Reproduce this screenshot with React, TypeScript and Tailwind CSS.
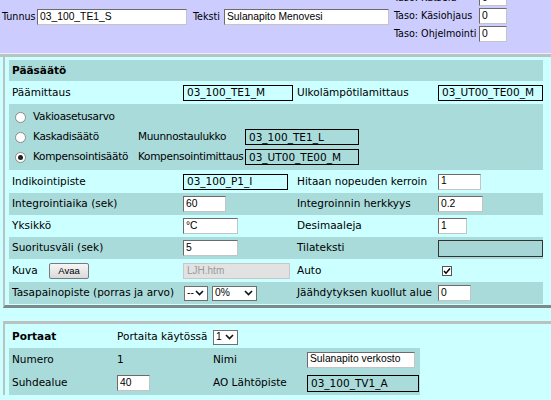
import React from "react";

const BLUE = "bg-[#a9dbdb]";
const CYAN = "bg-[#ccffff]";

function Field({ w, value, className = "" }: { w: string; value: string; className?: string }) {
  return (
    <div
      className={`${w} h-[16px] bg-white border border-t-[#6b6b6b] border-l-[#6b6b6b] border-r-[#c4c4c4] border-b-[#c4c4c4] flex items-center pl-[2px] font-['Liberation_Sans',Arial,sans-serif] text-[10.3px] leading-none text-black whitespace-nowrap overflow-hidden ${className}`}
    >
      {value}
    </div>
  );
}

function Box({ w, value, className = "" }: { w: string; value: string; className?: string }) {
  return (
    <div
      className={`${w} h-[16px] border border-black flex items-center pl-[3px] leading-none whitespace-nowrap overflow-hidden ${className}`}
    >
      {value}
    </div>
  );
}

function Radio({ checked }: { checked?: boolean }) {
  return (
    <span className="w-[11px] h-[11px] rounded-full bg-white border border-[#8a8a8a] flex items-center justify-center shrink-0">
      {checked && <span className="w-[5px] h-[5px] rounded-full bg-[#222]" />}
    </span>
  );
}

function Select({ w, value }: { w: string; value: string }) {
  return (
    <div
      className={`${w} h-[15px] bg-white border border-[#707070] flex items-center justify-between pl-[2px] pr-[3px] font-['Liberation_Sans',Arial,sans-serif] text-[10.3px] leading-none`}
    >
      <span>{value}</span>
      <svg width="9" height="6" viewBox="0 0 9 6">
        <path d="M1 1 L4.5 4.5 L8 1" fill="none" stroke="#111" strokeWidth="1.6" />
      </svg>
    </div>
  );
}

const ROW = "grid grid-cols-[172px_113px_142px_1fr] items-center";
const RROW = "grid grid-cols-[129px_107px_1fr] items-center h-[20px]";

export default function App() {
  return (
    <div className="w-[551px] h-[400px] overflow-hidden bg-[#ccffff] font-['DejaVu_Sans',sans-serif] text-[10.5px] text-black">
      {/* Top header */}
      <div className="bg-[#ccccff] -mt-[11px] pb-[10px] flex items-start font-['DejaVu_Sans_Condensed','DejaVu_Sans',sans-serif] text-[10.67px]">
        <div className="flex items-center mt-[20px]">
          <span className="w-[37px] pl-[2px]">Tunnus</span>
          <Field w="w-[150px]" value="03_100_TE1_S" />
          <span className="w-[37px] pl-[6px]">Teksti</span>
          <Field w="w-[165px]" value="Sulanapito Menovesi" />
        </div>
        <div className="ml-[5px] flex flex-col">
          {[
            ["Taso: Katselu", "0"],
            ["Taso: Käsiohjaus", "0"],
            ["Taso: Ohjelmointi", "0"],
          ].map(([l, v]) => (
            <div key={l} className="h-[18px] flex items-center">
              <span className="w-[85px] whitespace-nowrap">{l}</span>
              <Field w="w-[28px]" value={v} />
            </div>
          ))}
        </div>
      </div>
      <div className="h-px bg-[#eeeeff]" />
      <div className="h-[3px] bg-[#b9c3c3]" />

      {/* Pääsäätö panel */}
      <div className="ml-[3px] border-l-2 border-l-[#b9c3c3] border-b-[3px] border-b-[#7e8a8a] pl-[4px] pr-[8px] pt-[3px] pb-[1px]">
        <div className={`h-[21px] ${BLUE} flex items-center pl-[3px] font-bold`}>Pääsäätö</div>

        <div className={`${ROW} h-[23px] ${CYAN}`}>
          <span className="pl-[3px]">Päämittaus</span>
          <Box w="w-[110px]" value="03_100_TE1_M" className="ml-[2px]" />
          <span className="pl-[3px]">Ulkolämpötilamittaus</span>
          <Box w="w-[105px]" value="03_UT00_TE00_M" className="ml-[2px]" />
        </div>

        <div className={`h-[66px] ${BLUE} pt-[3px] tracking-[-0.3px]`}>
          <div className={RROW}>
            <div className="flex items-center gap-[7px] pl-[6px]">
              <Radio />
              <span>Vakioasetusarvo</span>
            </div>
          </div>
          <div className={RROW}>
            <div className="flex items-center gap-[7px] pl-[6px]">
              <Radio />
              <span>Kaskadisäätö</span>
            </div>
            <span>Muunnostaulukko</span>
            <Box w="w-[114px]" value="03_100_TE1_L" className="tracking-normal" />
          </div>
          <div className={RROW}>
            <div className="flex items-center gap-[7px] pl-[6px] whitespace-nowrap">
              <Radio checked />
              <span>Kompensointisäätö</span>
            </div>
            <span className="whitespace-nowrap">Kompensointimittaus</span>
            <Box w="w-[114px]" value="03_UT00_TE00_M" className="tracking-normal" />
          </div>
        </div>

        <div className={`${ROW} h-[23px] ${CYAN}`}>
          <span className="pl-[3px]">Indikointipiste</span>
          <Box w="w-[105px]" value="03_100_P1_I" className="ml-[2px]" />
          <span className="pl-[3px]">Hitaan nopeuden kerroin</span>
          <Field w="w-[43px]" value="1" className="ml-[2px]" />
        </div>

        <div className={`${ROW} h-[22px] ${BLUE}`}>
          <span className="pl-[3px]">Integrointiaika (sek)</span>
          <Field w="w-[43px]" value="60" className="ml-[2px]" />
          <span className="pl-[3px]">Integroinnin herkkyys</span>
          <Field w="w-[45px]" value="0.2" className="ml-[2px]" />
        </div>

        <div className={`${ROW} h-[22px] ${CYAN}`}>
          <span className="pl-[3px]">Yksikkö</span>
          <Field w="w-[55px]" value="°C" className="ml-[2px]" />
          <span className="pl-[3px]">Desimaaleja</span>
          <Field w="w-[29px]" value="1" className="ml-[2px]" />
        </div>

        <div className={`${ROW} h-[22px] ${BLUE}`}>
          <span className="pl-[3px]">Suoritusväli (sek)</span>
          <Field w="w-[55px]" value="5" className="ml-[2px]" />
          <span className="pl-[3px]">Tilateksti</span>
          <div className="ml-[2px] w-[105px] h-[17px] border border-[#333] bg-[#a6d6d6]" />
        </div>

        <div className={`${ROW} h-[23px] ${CYAN}`}>
          <div className="flex items-center pl-[3px]">
            <span className="w-[37px]">Kuva</span>
            <button className="w-[40px] h-[16px] border border-[#7a7a7a] rounded-[2px] bg-gradient-to-b from-[#f6f6f6] to-[#dadada] font-['Liberation_Sans',Arial,sans-serif] text-[9.5px] leading-none">
              Avaa
            </button>
          </div>
          <div className="ml-[2px] w-[107px] h-[16px] border border-[#c8c8c8] bg-[#e2e2e2] flex items-center pl-[3px] font-['Liberation_Sans',Arial,sans-serif] text-[10px] text-[#9a9a9a] leading-none">
            LJH.htm
          </div>
          <span className="pl-[3px]">Auto</span>
          <div className="ml-[6px] w-[10px] h-[10px] bg-white border border-[#555] flex items-center justify-center">
            <svg width="8" height="8" viewBox="0 0 8 8">
              <path d="M1 4 L3 6.2 L7 1.5" fill="none" stroke="#000" strokeWidth="1.5" />
            </svg>
          </div>
        </div>

        <div className={`${ROW} h-[22px] ${BLUE}`}>
          <span className="pl-[3px] whitespace-nowrap">Tasapainopiste (porras ja arvo)</span>
          <div className="flex items-center gap-[4px] ml-[3px]">
            <Select w="w-[24px]" value="--" />
            <Select w="w-[45px]" value="0%" />
          </div>
          <span className="pl-[3px] whitespace-nowrap">Jäähdytyksen kuollut alue</span>
          <Field w="w-[33px]" value="0" className="ml-[2px]" />
        </div>
      </div>

      {/* Portaat panel */}
      <div className="mt-[13px] ml-[3px] border-t-[3px] border-t-[#b9c1c1] border-l-2 border-l-[#b9c3c3] pl-[4px] pt-[2px]">
        <div className="grid grid-cols-[105px_97px_93px_1fr] items-center h-[22px] w-[411px]">
          <span className="pl-[3px] font-bold">Portaat</span>
          <span className="pl-[3px] whitespace-nowrap">Portaita käytössä</span>
          <div className="ml-[2px]">
            <Select w="w-[25px]" value="1" />
          </div>
        </div>
        <div className={`grid grid-cols-[105px_97px_93px_1fr] items-center h-[23px] w-[411px] ${BLUE}`}>
          <span className="pl-[3px]">Numero</span>
          <span className="pl-[3px]">1</span>
          <span className="pl-[2px]">Nimi</span>
          <Field w="w-[108px]" value="Sulanapito verkosto" className="ml-[3px]" />
        </div>
        <div className={`grid grid-cols-[105px_97px_93px_1fr] items-center h-[24px] w-[411px] ${BLUE}`}>
          <span className="pl-[3px]">Suhdealue</span>
          <Field w="w-[33px]" value="40" className="ml-[3px]" />
          <span className="pl-[2px] whitespace-nowrap">AO Lähtöpiste</span>
          <Box w="w-[112px]" value="03_100_TV1_A" className="ml-[3px] h-[17px]" />
        </div>
      </div>
    </div>
  );
}
